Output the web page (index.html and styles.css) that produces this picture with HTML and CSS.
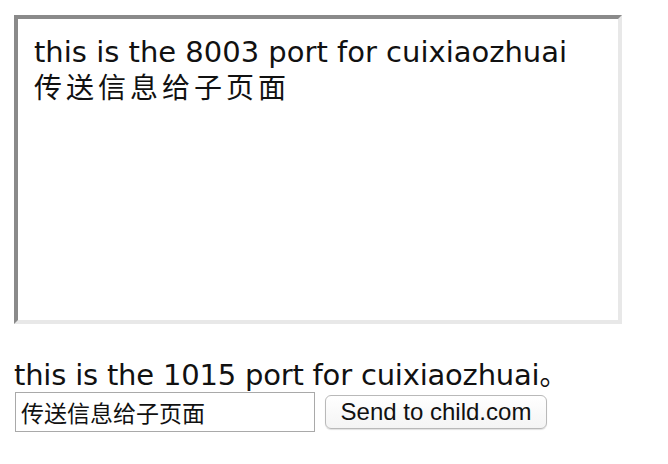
FILE: index.html
```html
<!DOCTYPE html>
<html>
<head>
<meta charset="utf-8">
<link rel="stylesheet" href="styles.css">
</head>
<body>
<div class="page">
  <div class="frame">
    <div class="line">this is the 8003 port for cuixiaozhuai</div>
    <div class="line cn">传送信息给子页面</div>
  </div>
  <div class="caption">this is the 1015 port for cuixiaozhuai<span class="dot">。</span></div>
  <div class="form">
    <input class="msg" type="text" value="传送信息给子页面">
    <button class="send" type="button">Send to child.com</button>
  </div>
</div>
</body>
</html>
```
FILE: styles.css
```css
html, body {
  margin: 0;
  padding: 0;
  background: #ffffff;
}
.page {
  padding: 15px 0 0 14px;
  font-family: "DejaVu Sans", "Noto Sans CJK SC", sans-serif;
  color: #111111;
}
.frame {
  box-sizing: border-box;
  width: 608px;
  height: 309px;
  border-style: solid;
  border-width: 4px;
  border-color: #8a8a8a #e8e8e8 #e8e8e8 #8a8a8a;
  padding: 17px 0 0 16px;
}
.line {
  font-size: 29px;
  line-height: 33px;
  white-space: nowrap;
}
.line.cn {
  font-family: "Noto Sans CJK SC", sans-serif;
  font-size: 28px;
  letter-spacing: 4px;
  line-height: 34px;
}
.caption {
  margin-top: 33px;
  font-size: 29px;
  line-height: 33px;
  white-space: nowrap;
  letter-spacing: -0.2px;
}
.dot {
  font-family: "Noto Sans CJK SC", sans-serif;
  font-size: 28px;
  line-height: 33px;
}
.form {
  display: flex;
  align-items: center;
  gap: 10px;
  margin-left: 1px;
}
.msg {
  box-sizing: border-box;
  width: 300px;
  height: 40px;
  margin: 0;
  padding: 0 5px;
  border: 1px solid #a9a9a9;
  font-family: "Noto Sans CJK SC", sans-serif;
  font-size: 23px;
  color: #111111;
  outline: none;
}
.send {
  box-sizing: border-box;
  width: 222px;
  height: 34px;
  margin: 0;
  padding: 0;
  border: 1px solid #b9b9b9;
  border-radius: 6px;
  background: linear-gradient(#ffffff, #f4f4f4);
  box-shadow: 0 1px 1px rgba(0, 0, 0, 0.12);
  font-family: "Liberation Sans", Arial, sans-serif;
  font-size: 24px;
  color: #111111;
}
```
